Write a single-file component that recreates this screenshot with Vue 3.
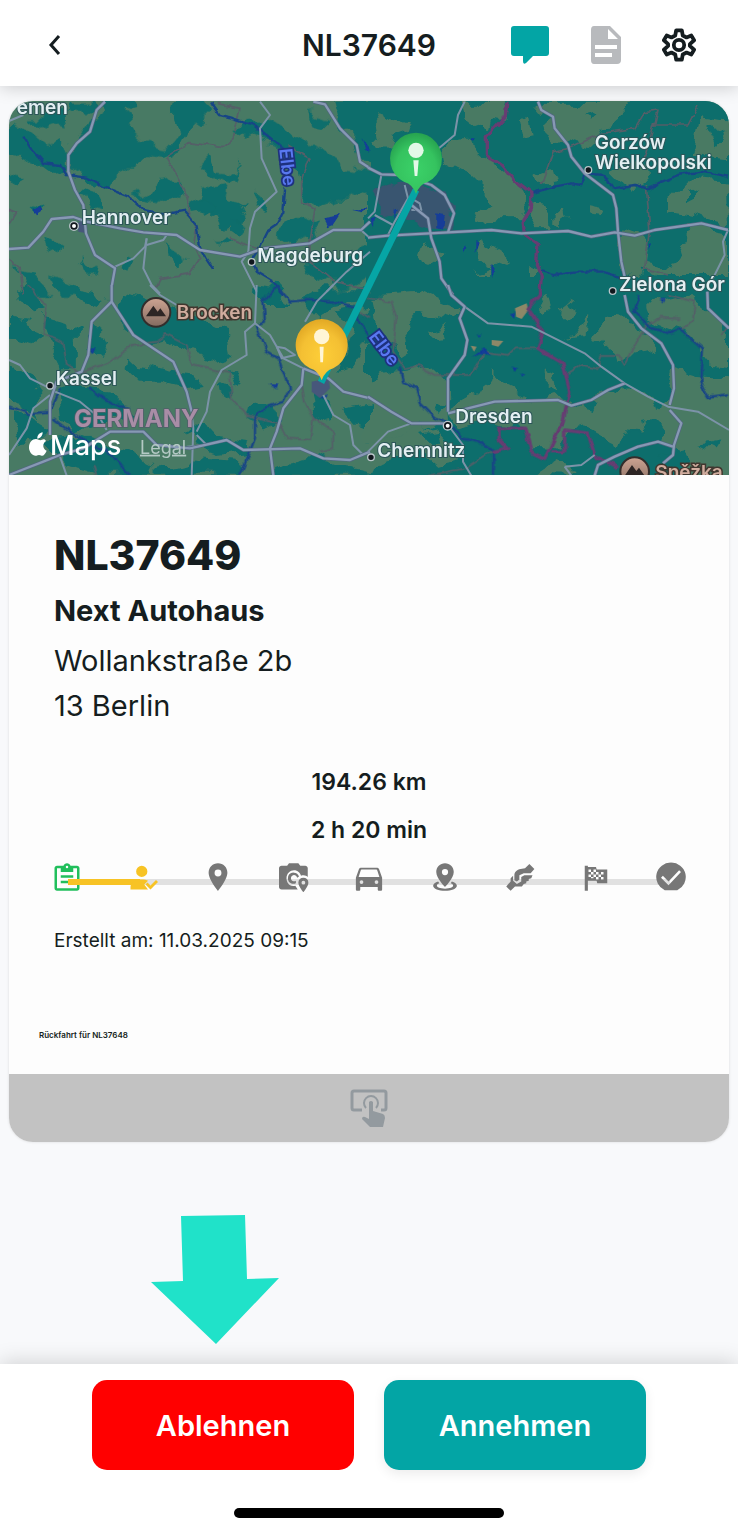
<script setup>
import { ref } from 'vue'

const order = ref({
  number: 'NL37649',
  company: 'Next Autohaus',
  street: 'Wollankstraße 2b',
  city: '13 Berlin',
  distance: '194.26 km',
  duration: '2 h 20 min',
  created: '11.03.2025 09:15',
  note: 'Rückfahrt für NL37648'
})

const steps = [
  { name: 'Auftrag', state: 'done', path: 'M19 3H14.8C14.4 1.8 13.3 1 12 1S9.6 1.8 9.2 3H4C2.9 3 2 3.9 2 5V21C2 22.1 2.9 23 4 23H20C21.1 23 22 22.1 22 21V5C22 3.900 21.100 3 20 3M12 3A1 1 0 0 1 12 5A1 1 0 0 1 12 3M7 8H17V5H20V21H4V5H7V8M7 10.500V12.500H17V10.500H7M7 15V17H14V15H7Z' },
  { name: 'Zuweisung', state: 'active', path: 'M11 3A4.500 4.500 0 0 1 11 12A4.500 4.500 0 0 1 11 3M2 22V20C2 16 7 14 11 14C13 14 15 14.400 16 15L13 18L16 22H2M18 22L14 18L15.600 16.400L18 18.800L22.400 14.400L24 16Z' },
  { name: 'Abholort', state: 'open', path: 'M12 1C7.800 1 4.500 4.300 4.500 8.500C4.500 14 12 23 12 23S19.500 14 19.500 8.500C19.500 4.300 16.200 1 12 1M12 11.500A2.700 2.700 0 0 1 12 6A2.700 2.700 0 0 1 12 11.500Z' },
  { name: 'Fotos', state: 'open', path: 'M8 1L6.500 3H2C1 3 0 4 0 5V20C0 21 1 22 2 22H15L13 19C8 20 6 16 6 13C6 9 9 6.500 12 6.500C15 6.500 17 8.500 17.600 11C20 10 22 11 23 12V5C23 4 22 3 21 3H17L15.500 1H8M12 8.500A4.500 4.500 0 1 0 13.500 17V15A2.500 2.500 0 1 1 14.500 12.500L16 11.500A4.500 4.500 0 0 0 12 8.500M19.500 12.500A4 4 0 0 0 15.500 16.500C15.500 19.500 19.500 24 19.500 24S23.500 19.500 23.500 16.500A4 4 0 0 0 19.500 12.500M19.500 18A1.500 1.500 0 0 1 19.500 15A1.500 1.500 0 0 1 19.500 18Z' },
  { name: 'Fahrzeug', state: 'open', path: 'M20 5.500C19.700 4.700 19 4.500 18 4.500H6C5 4.500 4.300 4.700 4 5.500L1.500 12.500V22C1.500 22.600 2 23 2.500 23H4C4.600 23 5 22.600 5 22V20H19V22C19 22.600 19.400 23 20 23H21.500C22 23 22.500 22.600 22.500 22V12.500L20 5.500M6.500 6H17.500C18.200 6 18.500 6.200 18.700 7L20.300 12H3.700L5.300 7C5.500 6.200 5.800 6 6.500 6M6 17.500A1.500 1.500 0 0 1 6 14.500A1.500 1.500 0 0 1 6 17.500M18 17.500A1.500 1.500 0 0 1 18 14.500A1.500 1.500 0 0 1 18 17.500Z' },
  { name: 'Zielort', state: 'open', path: 'M12 1C8.100 1 5 4 5 8C5 13 12 20 12 20S19 13 19 8C19 4 15.900 1 12 1M12 10.500A2.500 2.500 0 0 1 12 5.500A2.500 2.500 0 0 1 12 10.500M6.500 15.500C4.200 16.200 2.500 17.500 2.500 19C2.500 21.500 7 23 12 23S21.500 21.500 21.500 19C21.500 17.500 19.800 16.200 17.500 15.500L16.500 17C18 17.500 18.500 18.200 18.500 19C18.500 20 16 21.300 12 21.300S5.500 20 5.500 19C5.500 18.200 6 17.500 7.500 17Z' },
  { name: 'Übergabe', state: 'open', path: 'M19.500 1.500L23.500 5.500L20.500 9H15L11.500 10.500V14L9.500 15.500L7.500 14.500V10.500C7.500 8 9.500 6 12.500 5.500L16 5ZM1.500 19L4.500 15.500V13L6.500 11V15L9.500 17.500L13 15.500V12L15.500 10.500H22L21 13L19 13.500V15L17 15.500V17L15 17.500L13.500 19.500H8L4.500 23L1 19.500Z' },
  { name: 'Ziel', state: 'open', path: 'M3 3H5.500V4H12L12.500 6H21V17H13L12.500 15H5.500V23H3V3M6 6V8H8V6H6M10 6V8H12V6H10M8 8V10H10V8H8M12 8V10H14V8H12M16 8V10H18V8H16M6 10V12H8V10H6M10 10V12H12V10H10M14 10V12H16V10H14M12 12V14H14V12H12M16 12V14H18V12H16M8 12V13H10V12H8Z' },
  { name: 'Abgeschlossen', state: 'open', path: 'M12 0.500A11.500 11.500 0 0 0 7 22.500H17A11.500 11.500 0 0 0 12 0.500M10 18.500L4 12.500L5.500 11L10 15.500L18.500 6.500L20 8Z' }
]

// map tiles, three units per map pixel
const tiles = [
  {
    x: 0, y: 0, wooded: false,
    forests: [
      '310,20 290,70 240,125 205,170 210,215 260,250 280,275 320,260 370,225 410,200 440,180 490,185 540,155 570,100 600,95 640,60 620,20 540,20 530,60 545,110 500,160 440,150 400,110 370,60 400,40 395,20',
      '85,70 120,100 160,90 200,100 190,50 230,40 260,60 280,40 280,20 210,20 200,50 130,70',
      '27,160 60,200 90,190 150,240 200,230 200,170 180,130 140,150 90,110 30,90',
      '410,310 450,290 480,250 520,245 550,275 540,310 490,330 450,320',
      '590,215 625,180 640,230 700,235 725,205 690,270 640,250',
      '620,280 660,270 690,310 740,320 720,370 680,395 660,350 640,370 600,340',
      '690,100 760,90 820,80 900,130 960,170 1040,210 1110,230 1110,310 1050,300 960,330 920,320 900,280 890,200 830,150 770,130',
      '1000,20 1110,20 1110,200 1085,190 1060,130 1020,90',
      '925,50 990,70 970,90 930,80', '900,360 960,390 930,430 880,460 830,420',
      '920,500 980,480 1050,490 1110,470 1110,560 1030,580 960,550',
      '50,520 100,530 120,570 150,600 90,600', '150,550 210,570 270,600 180,600', '235,500 290,520 285,540 250,530',
      '500,445 570,490 550,510 510,480', '130,425 190,450 180,480 140,460', '385,500 410,510 400,545 380,530',
      '570,310 640,330 620,380 580,350', '780,300 800,350 760,340', '90,320 130,330 110,355',
      '27,260 60,240 80,255 60,280', '240,300 280,290 300,330 270,350', '690,370 740,390 720,420 690,400', '640,440 680,430 690,455'
    ],
    clearings: ['275,150 300,140 325,180 310,215 280,200'],
    roads: [
      '315,20 290,45 270,110 230,145 205,180 205,230 225,285 250,330 258,415 285,480 345,520 335,575',
      '27,462 85,458 130,410 155,372 220,366 260,380 360,400 430,412 530,420 600,465 720,485 790,460 930,445 1000,405 1083,405 1110,380',
      '940,20 975,28 1020,100 1070,150 1080,200 1110,220'
    ],
    lanes: [
      '780,20 810,60 780,100 785,190 830,290 765,350 750,400 745,470 725,500 740,530 770,590',
      '345,515 400,490 435,455 440,430', '440,430 430,520 455,570 480,595', '440,450 490,435 500,420',
      '1110,470 1040,530 980,590', '27,78 70,60', '1083,405 1110,430'
    ],
    rivers: [
      '70,125 95,165 130,205 180,210 200,240 260,248 310,275 385,305 430,345 500,360 555,350 590,390 600,460 640,520',
      '630,20 660,60 700,70 760,90 800,120 850,160', '855,280 850,350 830,390 800,410 780,450 755,490 770,530 820,560 850,600'
    ],
    borders: [
      '27,340 50,350 27,390', '650,25 720,40 700,130 670,155 570,140 500,185 530,240 565,310 565,350 590,400 580,450 600,490 570,535 480,550 460,590',
      '860,150 930,190 905,260 905,320 945,340 930,440 930,500 1000,560 1100,580', '27,490 60,520 70,600', '690,430 770,460'
    ],
    lakes: ['95,345 122,332 125,345 105,358', '970,370 1020,360 1000,390 985,397', '1060,345 1105,340 1090,352', '1085,130 1110,170 1095,165']
  },
  {
    x: 1104, y: 0, wooded: true,
    forests: ['640,60 680,50 670,80', '960,280 1000,300 960,320', '1020,100 1060,120 1040,150', '820,520 860,540 840,560'],
    clearings: [
      '20,90 40,55 100,75 130,120 70,140 60,180 30,150', '290,20 410,20 400,70 350,110 340,90 310,100 300,60',
      '510,20 790,20 760,60 700,110 680,150 600,130 560,150 530,100 550,70',
      '240,130 280,120 350,180 380,220 430,260 480,300 485,330 460,370 380,370 330,390 320,350 370,310 300,240 240,210 230,160',
      '500,320 540,330 545,400 480,400', '490,250 540,230 550,265 510,270', '900,310 960,250 1080,260 1083,390 960,360 900,350',
      '1000,70 1080,80 1080,190 980,180', '740,230 830,190 840,260 780,290 740,260', '560,375 600,340 605,370 575,390',
      '345,430 400,460 420,490 370,520 340,500', '160,430 230,480 180,510 150,470', '300,540 370,520 380,590 310,580',
      '760,400 850,430 840,500 900,520 960,430 940,390 1080,410 1080,600 770,600 790,520 740,480', '0,540 60,580 120,600 0,600',
      '450,80 490,60 500,120 460,130', '480,510 520,530 510,570 480,560', '660,330 710,340 700,360 660,355'
    ],
    roads: [
      '510,20 520,45 555,65 560,100 600,150 610,185 650,235 735,300 745,340 750,410 760,500 770,545',
      '0,428 60,422 240,412 370,405 460,415 600,408 670,425 740,412 800,422 860,405 1000,385 1080,405',
      '0,218 40,238 100,240 190,270 230,300 258,355 240,412', '130,330 180,370 190,430 215,500 220,550 255,600'
    ],
    lanes: [
      '290,20 270,60 260,120 200,170', '1080,405 1065,440 1070,480 1030,560', '40,240 20,350 0,370',
      '110,270 120,310 80,380 60,420', '20,360 75,390', '130,345 160,345 155,325 130,310'
    ],
    rivers: ['490,295 560,275 610,265 640,270 650,235 710,240 735,280 800,270 840,280 930,240 1000,230 1083,245', '520,525 570,540 620,530 700,530 770,550'],
    borders: ['520,270 555,170 600,160 700,115 800,100 830,50 870,45 860,90 960,90 990,30', '830,190 860,80', '835,270 845,400 830,520 900,540'],
    frontier: ['420,20 415,60 355,125 355,180 400,210 440,255 492,295 490,340 465,380 470,420 510,450 505,510 520,545 515,600'],
    lakes: ['205,355 230,360 225,405 205,400', '305,130 320,130 315,140', '325,435 335,440 325,470', '285,450 295,455 285,472', '370,510 380,520 372,550', '80,345 90,340 78,375', '5,370 20,365 18,400', '610,25 630,35', '845,445 852,450 845,462']
  },
  {
    x: 0, y: 570, wooded: false,
    forests: [
      '370,20 430,30 520,80 600,110 690,150 700,210 640,225 560,200 500,160 420,170 370,130 350,60',
      '27,100 90,110 120,160 80,190 27,170', '60,0 110,20 140,70 100,90 70,50', '130,90 200,110 230,140 230,250 190,250 150,170',
      '260,140 300,130 325,180 300,215 270,200', '385,210 415,240 460,245 510,260 600,270 620,290 540,305 480,290 420,290 380,250',
      '645,300 700,330 690,350 650,320', '690,260 725,290 710,310', '170,300 260,320 340,330 380,370 400,400 330,410 230,440 180,400',
      '27,230 80,260 130,330 110,400 27,350', '27,380 90,400 150,440 50,470', '130,470 250,460 400,500 460,530 450,572 300,572 200,540',
      '560,430 620,440 760,460 750,500 650,510 600,490', '470,540 560,520 700,530 720,572 470,572', '750,360 830,350 850,400 790,430 740,410',
      '940,330 1000,370 990,410 950,380', '1010,80 1110,60 1110,150 1060,250 1000,260 1060,150', '900,50 950,100 1000,60 1110,50 1110,10 980,10',
      '1030,370 1110,350 1110,430 1050,420', '820,540 920,510 1110,560 1110,572 820,572', '210,0 320,30 280,60 230,30', '750,0 850,10 880,60 800,60'
    ],
    clearings: ['520,110 570,130 540,150', '300,510 350,520 330,545'],
    roads: [
      '335,0 335,50 275,110 265,210 245,260 170,290 150,350 150,450', '27,570 130,530 180,510 250,490 330,440 430,440 470,480 570,490 680,465 730,495 900,490 970,520 1050,525 1110,500',
      '335,50 400,150 520,230 560,320 575,380', '910,250 905,300 850,370 830,440 810,490 820,572', '910,250 985,280 1030,320 1110,340'
    ],
    lanes: [
      '575,380 580,430 575,572', '770,0 765,115 735,140 740,210 665,255 630,320 620,380 590,440', '1000,0 950,50 915,110',
      '765,115 810,150 850,220 910,250', '830,185 855,190 885,210 845,220 830,185', '150,330 100,370 80,430 27,510', '150,310 90,280 60,240 27,225',
      '165,320 240,350 300,400 320,435', '970,330 1000,390 1050,420 1060,480 1090,510', '450,0 480,30 530,60', '180,515 200,572', '590,450 620,480 560,485'
    ],
    rivers: [
      '830,0 870,50 920,45 1000,50 1070,65', '770,120 800,200 840,225 870,310 850,350 790,370 765,400 765,460 720,572',
      '27,365 90,385 150,380 180,310', '160,400 240,460 340,510 390,572', '1070,90 1085,120 1110,160', '270,310 340,360 390,370', '830,0 790,50 795,110 770,120'
    ],
    borders: [
      '80,0 140,60 130,150 190,170 200,240 240,265 330,230 400,180 470,170 500,150 560,180 575,240 690,265 695,340 740,390 840,420 860,460 930,465 940,400 1000,440 1000,490 960,500',
      '905,300 915,350 940,400', '280,540 290,572', '1110,100 1080,80'
    ],
    lakes: ['805,295 835,295 830,310', '270,190 290,190 280,205', '960,340 980,330 975,345']
  },
  {
    x: 1104, y: 570, wooded: true,
    forests: [
      '760,440 820,440 850,400 880,430 870,470 800,480', '640,350 690,350 680,375 650,370', '890,515 950,500 960,540 880,540', '150,450 210,440 220,470 170,470',
      '1000,470 1060,460 1040,490', '200,345 235,350 215,375'
    ],
    clearings: [
      '10,30 150,20 220,50 280,70 270,110 190,90 150,80 120,110 130,200 100,220 60,180 30,120', '180,140 240,120 220,150 190,155',
      '510,40 530,20 545,70 530,85', '575,70 600,50 620,90 600,100', '680,150 730,100 800,110 830,150 870,190 790,210 760,230 700,190',
      '620,150 655,100 650,150 590,160', '840,60 970,30 1040,90 1080,140 1080,240 1010,230 1000,180 960,150 900,130 850,110',
      '240,380 330,330 380,250 400,300 480,340 560,330 580,350 600,360 720,320 780,300 880,370 920,250 990,270 1110,280 1110,600 980,600 930,500 850,440 760,430 740,480 650,430 600,440 580,500 540,490 490,490 470,430 390,420 330,410 270,430',
      '0,280 100,260 200,240 235,280 240,400 120,460 0,480', '0,480 100,450 200,430 280,520 200,540 150,500 60,530 0,560', '530,260 560,270 570,320 530,300',
      '500,570 560,530 620,550 600,572'
    ],
    roads: [
      '240,0 250,30 290,65 275,100 298,165 290,210 240,280 240,380', '770,30 780,80 820,130 880,175 915,240 918,310 905,360',
      '240,385 380,350 570,345 610,362 670,345 720,315 770,295', '0,335 70,380 130,415 230,415', '905,375 940,415 918,480 915,510 885,535',
      '680,572 690,540 740,515 810,485 870,470 915,485', '1018,20 1020,70 1083,130'
    ],
    lanes: ['290,65 360,115 490,125 650,205 700,245 770,295 840,335 900,365 990,380 1083,435', '130,415 60,440 0,500', '240,420 285,480 285,530 310,572', '590,545 640,540 680,510', '590,545 610,572'],
    rivers: ['95,245 105,290 145,310 155,355 200,400 250,420 280,460 330,470 375,495 375,572', '815,30 800,80 850,130 910,145 935,130 970,160 1005,190 1000,290 1020,335 1083,328'],
    borders: [
      '0,40 70,50 85,100 75,200 110,250 150,240 200,270 310,270 350,200 420,210 440,190 510,190', '600,265 640,240 690,250 700,210 750,210 770,240 830,130 880,95 940,100',
      '180,572 290,550 370,500', '900,30 980,50 975,110 940,130', '1083,120 1060,150'
    ],
    frontier: ['515,0 515,30 480,70 525,140 510,190 585,235 605,320 585,410 530,520 490,500 470,430 390,430 390,460 420,490 370,500', '550,500 590,500 590,435 660,445 680,510 750,545'],
    lakes: ['425,85 445,80 440,100', '330,150 340,145 335,155', '310,215 345,190 370,210 335,205', '430,245 450,250 440,260', '460,265 475,270 465,278', '420,155 430,148', '875,40 890,38 885,50']
  }
]

const places = [
  { name: 'emen', x: 50, y: 58 },
  { name: 'Hannover', x: 245, y: 386, dotX: 222, dotY: 393, capital: true },
  { name: 'Magdeburg', x: 772, y: 500, dotX: 755, dotY: 501 },
  { name: 'Gorzów', x: 1784, y: 163 },
  { name: 'Wielkopolski', x: 1784, y: 223, dotX: 1765, dotY: 225 },
  { name: 'Zielona Gór', x: 1857, y: 588, dotX: 1838, dotY: 588 },
  { name: 'Kassel', x: 167, y: 871, dotX: 150, dotY: 872 },
  { name: 'Dresden', x: 1366, y: 984, dotX: 1343, dotY: 992, capital: true },
  { name: 'Chemnitz', x: 1132, y: 1086, dotX: 1113, dotY: 1087 }
]

const peaks = [
  { name: 'Brocken', x: 468, y: 652 },
  { name: 'Sněžka', x: 1904, y: 1130 }
]
</script>

<template>
  <div class="page">
    <header class="topbar">
      <button class="icon-btn" type="button" aria-label="Zurück">
        <svg width="24" height="24" viewBox="0 0 24 24" fill="none" stroke="#151d20" stroke-width="3"><path d="M17 3L9 12L17 21" /></svg>
      </button>
      <h1 class="topbar-title">{{ order.number }}</h1>
      <nav class="actions">
        <button class="icon-btn" type="button" aria-label="Nachrichten">
          <svg width="40" height="40" viewBox="0 0 40 40" fill="#03a5a5"><path d="M4 1H36Q39 1 39 4V28Q39 31 36 31H23L16 38Q13 40 13 36V31H4Q1 31 1 28V4Q1 1 4 1Z" /></svg>
        </button>
        <button class="icon-btn" type="button" aria-label="Dokumente">
          <svg width="32" height="40" viewBox="0 0 32 40" fill="#b8babd"><path fill-rule="evenodd" d="M4 1H20L31 12V35Q31 39 27 39H4Q1 39 1 35V5Q1 1 4 1M18 4V14H28ZM5 20V24H27V20ZM5 28V32H22V28Z" /></svg>
        </button>
        <button class="icon-btn" type="button" aria-label="Einstellungen">
          <svg width="34" height="34" viewBox="0 0 36 36" fill="none" stroke="#151d20" stroke-width="4" stroke-linejoin="round"><path d="M15 2.500H21L22 8L26 10L31 8L34 13L29.500 17V19L34 23L31 28L26 26L22 28L21 33.500H15L14 28L10 26L5 28L2 23L6.500 19V17L2 13L5 8L10 10L14 8Z" /><circle cx="18" cy="18" r="5.500" /></svg>
        </button>
      </nav>
    </header>

    <main class="content">
      <article class="card">
        <svg class="map" viewBox="27 18 2160 1122" role="img" aria-label="Karte mit Route">
          <defs>
            <filter id="rough" x="-5%" y="-5%" width="110%" height="110%">
              <feTurbulence type="fractalNoise" baseFrequency="0.014" numOctaves="3" seed="7" />
              <feDisplacementMap in="SourceGraphic" scale="70" xChannelSelector="R" yChannelSelector="G" />
            </filter>
            <filter id="wobble" x="-5%" y="-5%" width="110%" height="110%">
              <feTurbulence type="fractalNoise" baseFrequency="0.03" numOctaves="2" seed="3" />
              <feDisplacementMap in="SourceGraphic" scale="18" xChannelSelector="R" yChannelSelector="G" />
            </filter>
            <radialGradient id="green-pin" cx="50%" cy="60%" r="65%"><stop offset="0" stop-color="#3bd168" /><stop offset="0.6" stop-color="#35c35f" /><stop offset="1" stop-color="#239a4b" /></radialGradient>
            <radialGradient id="yellow-pin" cx="50%" cy="60%" r="65%"><stop offset="0" stop-color="#fdce38" /><stop offset="0.6" stop-color="#f4c033" /><stop offset="1" stop-color="#dda321" /></radialGradient>
            <linearGradient id="peak" x1="0" y1="0" x2="0" y2="1"><stop offset="0" stop-color="#cda492" /><stop offset="1" stop-color="#846b60" /></linearGradient>
          </defs>
          <rect x="0" y="0" width="2214" height="1170" fill="#487a64" />
          <g filter="url(#rough)">
            <g v-for="tile in tiles" :key="`${tile.x}-${tile.y}`" :transform="`translate(${tile.x} ${tile.y})`">
              <rect v-if="tile.wooded" x="0" y="-30" width="1140" height="630" class="forest" />
              <polygon v-for="p in tile.clearings" :key="p" :points="p" class="clearing" />
              <polygon v-for="p in tile.forests" :key="p" :points="p" class="forest" />
            </g>
          </g>
          <polygon points="1130,280 1180,260 1300,285 1355,330 1345,405 1270,400 1210,365 1140,360" fill="#454f72" opacity="0.8" filter="url(#rough)" />
          <polygon points="935,860 985,850 990,880 960,910 935,890" fill="#47577b" />
          <polygon points="230,385 255,375 260,415 235,410" fill="#47577b" />
          <path d="M1545 640L1580 625L1585 645L1565 672L1548 665ZM1475 735L1510 738L1495 755L1475 750ZM1412 752L1430 755L1422 770Z" fill="#8d8868" />
          <g filter="url(#wobble)">
            <g v-for="tile in tiles" :key="`${tile.x}-${tile.y}`" :transform="`translate(${tile.x} ${tile.y})`">
              <polyline v-for="p in tile.borders" :key="p" :points="p" class="border" />
              <polyline v-for="p in tile.rivers" :key="p" :points="p" class="river" />
              <polygon v-for="p in tile.lakes" :key="p" :points="p" fill="#123d98" />
              <polyline v-for="p in tile.frontier" :key="p" :points="p" class="frontier" />
            </g>
          </g>
          <g v-for="tile in tiles" :key="`${tile.x}-${tile.y}`" :transform="`translate(${tile.x} ${tile.y})`">
            <polyline v-for="p in tile.lanes" :key="p" :points="p" class="lane" />
            <polyline v-for="p in tile.roads" :key="p" :points="p" class="road-edge" />
            <polyline v-for="p in tile.roads" :key="p" :points="p" class="road" />
          </g>

          <path d="M1248 285L963 862" stroke="#06a5a5" stroke-width="21" />

          <text class="river-name" transform="translate(838 162) rotate(84)">Elbe</text>
          <text class="river-name" transform="translate(1104 726) rotate(53)">Elbe</text>
          <g v-for="place in places" :key="place.name">
            <circle v-if="place.dotX" :cx="place.dotX" :cy="place.dotY" :r="place.capital ? 13 : 10" fill="#10171c" stroke="#b9c4c9" stroke-width="4" />
            <circle v-if="place.capital" :cx="place.dotX" :cy="place.dotY" r="6" fill="#fff" />
            <text :x="place.x" :y="place.y" class="place">{{ place.name }}</text>
          </g>
          <g v-for="peak in peaks" :key="peak.name" :transform="`translate(${peak.x} ${peak.y})`">
            <circle r="43" fill="url(#peak)" stroke="#342e2c" stroke-width="6" />
            <path d="M-30 12L-8 -20L5 -2L13 -12L30 12Z" fill="#2d2524" />
            <text x="62" y="21" class="peak-name">{{ peak.name }}</text>
          </g>
          <text x="222" y="997" class="country">GERMANY</text>

          <g transform="translate(1248 192)">
            <path d="M0 105Q-10 76 -35 69A78 78 0 1 1 35 69Q10 76 0 105Z" fill="url(#green-pin)" />
            <circle cy="-26" r="23" fill="#e3f8e7" /><path d="M-8 4H8L4 51H-4Z" fill="#e3f8e7" />
          </g>
          <g transform="translate(965 751)">
            <path d="M0 105Q-10 76 -35 69A78 78 0 1 1 35 69Q10 76 0 105Z" fill="url(#yellow-pin)" />
            <circle cy="-26" r="23" fill="#fff5d6" /><path d="M-6 4H6L4 51H-4Z" fill="#fff5d6" />
          </g>

          <path d="M128 1012C128 1023 121 1031 112 1031C111 1021 119 1013 128 1012M87 1058C87 1042 97 1032 108 1032C114 1032 117 1036 121 1036S129 1031 135 1034L138 1038C126 1046 128 1062 140 1067C136 1076 131 1083 125 1082C119 1079 115 1079 109 1082C98 1084 87 1070 87 1058Z" fill="#fff" />
          <text x="150" y="1080" class="brand">Maps</text>
          <a href="#legal"><text x="420" y="1076" class="legal">Legal</text></a>
        </svg>

        <section class="details">
          <h2 class="number">{{ order.number }}</h2>
          <h3 class="company">{{ order.company }}</h3>
          <p class="address">{{ order.street }}<br>{{ order.city }}</p>
          <p class="metric">{{ order.distance }}</p>
          <p class="metric">{{ order.duration }}</p>
          <ol class="steps">
            <li v-for="step in steps" :key="step.name" :class="['step', step.state]">
              <svg width="30" height="30" viewBox="0 0 24 24" role="img" :aria-label="step.name">
                <path :d="step.path" fill="currentColor" fill-rule="evenodd" />
              </svg>
            </li>
          </ol>
          <p class="created">Erstellt am: {{ order.created }}</p>
        </section>
        <p class="note">{{ order.note }}</p>
        <button class="expand" type="button" aria-label="Details öffnen">
          <svg width="38" height="38" viewBox="0 0 38 38" fill="none" stroke="#939a9f" stroke-width="3">
            <path d="M12 21H4Q2 21 2 19V4Q2 2 4 2H34Q36 2 36 4V19Q36 21 34 21H31" />
            <path d="M16 19A7 7 0 1 1 26 19" stroke-width="2" />
            <path d="M19 13Q21 11 23 13V22L33 25Q35 26 35 29L33 38H20L12 30Q12 27 15 28L19 30Z" fill="#939a9f" stroke="none" />
          </svg>
        </button>
      </article>

      <svg class="arrow" width="128" height="129" viewBox="0 0 128 129" fill="#20e2c9" aria-hidden="true">
        <path d="M30 1L94 0L96 64L128 63L65 129L0 67L32 66Z" />
      </svg>
    </main>

    <footer class="bottom">
      <div class="buttons">
        <button class="btn reject" type="button">Ablehnen</button>
        <button class="btn accept" type="button">Annehmen</button>
      </div>
      <div class="home-bar"></div>
    </footer>
  </div>
</template>

<style>
body {
  margin: 0;
  background: #f8f9fb;
}
</style>

<style scoped>
.page {
  display: flex;
  flex-direction: column;
  min-height: 100vh;
  font-family: Inter, "Liberation Sans", sans-serif;
  color: #151d20;
}

h1, h2, h3, p, ol {
  margin: 0;
  padding: 0;
}

button {
  font-family: inherit;
  border: 0;
  cursor: pointer;
}

svg {
  display: block;
}

.topbar {
  display: grid;
  grid-template-columns: 1fr auto 1fr;
  align-items: center;
  padding: 23px 40px 19px;
  background: #fff;
  box-shadow: 0 2px 16px rgba(0, 0, 0, 0.18);
}

.topbar-title {
  font-size: 30px;
  font-weight: 600;
  line-height: 36px;
}

.icon-btn {
  justify-self: start;
  padding: 2px;
  background: none;
}

.actions {
  display: flex;
  justify-content: flex-end;
  align-items: center;
  gap: 36px;
}

.content {
  flex: 1;
  padding: 15px 9px;
}

.card {
  overflow: hidden;
  border-radius: 24px;
  background: #fdfdfd;
  box-shadow: 0 0 3px rgba(0, 0, 0, 0.12);
}

.map {
  width: 100%;
  height: auto;
}

.forest {
  fill: #0a6e6c;
}

.clearing {
  fill: #487a64;
}

.road, .road-edge, .lane, .river, .border, .frontier {
  fill: none;
  stroke-linejoin: round;
}

.road-edge {
  stroke: #526681;
  stroke-width: 11;
}

.road {
  stroke: #8799b4;
  stroke-width: 7;
}

.lane {
  stroke: #7c93a8;
  stroke-width: 6;
}

.river {
  stroke: #194586;
  stroke-width: 7;
}

.border {
  stroke: #555e68;
  stroke-width: 5;
}

.frontier {
  stroke: #663c72;
  stroke-width: 10;
}

.place, .peak-name {
  font-size: 57px;
  font-weight: 600;
  paint-order: stroke;
}

.place {
  fill: #e3eff2;
  stroke: #2c5558;
  stroke-width: 6px;
}

.peak-name {
  fill: #d0ac9e;
  stroke: #40372f;
  stroke-width: 9px;
}

.river-name {
  font-size: 54px;
  font-weight: 600;
  fill: #5978f1;
  stroke: #1e317f;
  stroke-width: 10px;
  paint-order: stroke;
}

.country {
  font-size: 72px;
  font-weight: 700;
  fill: #a98da6;
  stroke: #50606a;
  stroke-width: 5px;
  paint-order: stroke;
}

.brand {
  font-size: 81px;
  font-weight: 500;
  fill: #fff;
}

.legal {
  font-size: 54px;
  fill: #b4c9c5;
  text-decoration: underline;
}

.details {
  padding: 56px 45px 0;
}

.number {
  font-size: 41px;
  font-weight: 800;
  line-height: 48px;
}

.company {
  margin-top: 12px;
  font-size: 29px;
  font-weight: 700;
  line-height: 40px;
}

.address {
  margin: 7px 0 34px;
  font-size: 29px;
  line-height: 45px;
}

.metric {
  margin-bottom: 8px;
  font-size: 23px;
  font-weight: 600;
  line-height: 40px;
  text-align: center;
}

.steps {
  position: relative;
  display: flex;
  justify-content: space-between;
  margin: 12px -2px 0;
  list-style: none;
}

.steps::before {
  content: "";
  position: absolute;
  top: 17px;
  left: 16px;
  right: 16px;
  height: 6px;
  background: linear-gradient(to right, #f7c325 12%, #e1e1e1 12%);
}

.step {
  position: relative;
  color: #777;
}

/* the line runs over the finished step */
.step.done {
  position: static;
  color: #21bf5c;
}

.step.active {
  color: #f7c325;
}

.created {
  margin-top: 37px;
  font-size: 19px;
  line-height: 24px;
}

.note {
  margin: 76px 30px 33px;
  font-size: 8px;
  font-weight: 600;
  line-height: 12px;
}

.expand {
  display: flex;
  justify-content: center;
  width: 100%;
  padding: 15px 0;
  background: #c2c2c2;
}

.arrow {
  margin: 73px 0 0 142px;
}

.bottom {
  padding: 16px 92px 15px;
  background: #fff;
  box-shadow: 0 -2px 20px rgba(0, 0, 0, 0.16);
}

.buttons {
  display: flex;
  gap: 30px;
}

.btn {
  flex: 1;
  height: 90px;
  border-radius: 15px;
  color: #fff;
  font-size: 29px;
  font-weight: 600;
}

.reject {
  background: #f00;
}

.accept {
  background: #03a5a5;
  box-shadow: 0 4px 12px rgba(0, 0, 0, 0.08);
}

.home-bar {
  width: 270px;
  height: 10px;
  margin: 38px auto 0;
  border-radius: 5px;
  background: #000;
}
</style>
